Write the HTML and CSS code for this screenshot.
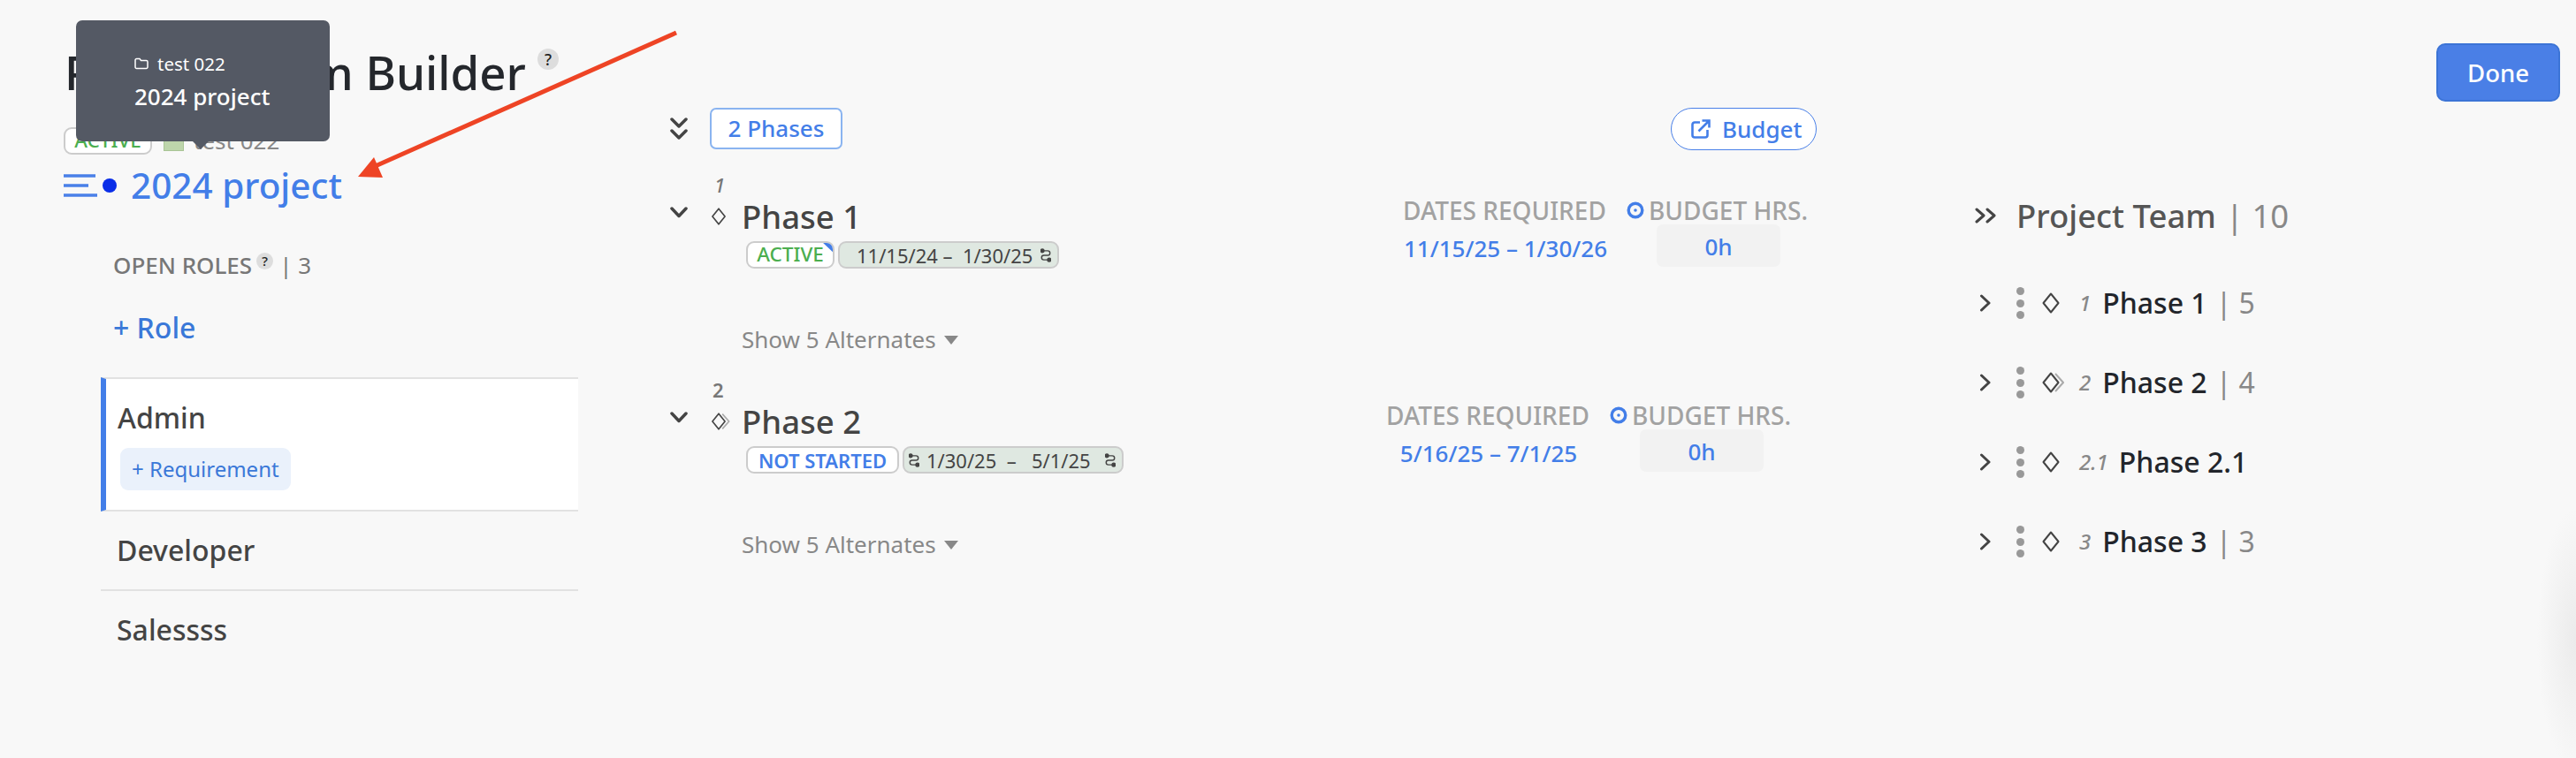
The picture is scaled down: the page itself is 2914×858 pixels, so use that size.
FILE: index.html
```html
<!DOCTYPE html>
<html lang="en">
<head>
<meta charset="utf-8">
<title>Project Team Builder</title>
<link rel="stylesheet" href="styles.css">
</head>
<body>
<svg class="defs" aria-hidden="true">
  <symbol id="diamond" viewBox="0 0 20 24"><path d="M10 1.5 18.5 12 10 22.5 1.5 12Z"/></symbol>
  <symbol id="diamond-next" viewBox="0 0 26 24"><path class="ghost" d="M15 2 24 12 15 22"/><path d="M10 1.5 18.5 12 10 22.5 1.5 12Z"/></symbol>
  <symbol id="swap" viewBox="0 0 14 18"><path d="M3 3H9.5A2.8 2.8 0 0 1 9.5 9H4.5A2.8 2.8 0 0 0 4.500 15H11"/><circle class="fill" cx="2.500" cy="3" r="2.100"/><circle class="fill" cx="11.500" cy="15" r="2.100"/></symbol>
</svg>

<div class="page">
  <section class="left">
    <h1 class="title">Project Team Builder<span class="help help-lg">?</span></h1>
    <div class="status-row">
      <span class="pill pill-green">ACTIVE</span>
      <span class="swatch"></span>
      <span class="client">test 022</span>
    </div>
    <div class="project-row">
      <svg class="burger" viewBox="0 0 38 26"><path d="M0 2H36M0 13H28M0 24H38"/></svg>
      <span class="dot"></span>
      <a class="project-name">2024 project</a>
    </div>
    <div class="roles-head">OPEN ROLES<span class="help help-sm">?</span><span class="roles-count">| 3</span></div>
    <div class="add-role">+ Role</div>
    <ul class="roles">
      <li class="role role-active">
        <div class="role-name">Admin</div>
        <span class="add-req">+ Requirement</span>
      </li>
      <li class="role role-line"><div class="role-name">Developer</div></li>
      <li class="role role-last"><div class="role-name">Salessss</div></li>
    </ul>
  </section>

  <section class="middle">
    <div class="mid-head">
      <div class="mid-head-left">
        <svg class="dbl-down" viewBox="0 0 20 26"><path d="M2 2 10 10 18 2M2 15 10 23 18 15"/></svg>
        <span class="phases-btn">2 Phases</span>
      </div>
      <span class="budget-btn">
        <svg class="ext" viewBox="0 0 22 22"><path d="M10 3.500H4A2.500 2.500 0 0 0 1.500 6V18A2.500 2.500 0 0 0 4 20.500H16A2.500 2.500 0 0 0 18.500 18V12M8.500 13.500 20 2M12.500 1.500H20.500V9.500"/></svg>
        Budget
      </span>
    </div>

    <article class="phase">
      <div class="phase-num">1</div>
      <svg class="chev-down" viewBox="0 0 20 13"><path d="M2 2 10 10.500 18 2"/></svg>
      <svg class="dia dia-mid"><use href="#diamond"/></svg>
      <div class="phase-name">Phase 1</div>
      <div class="pills">
        <span class="pill pill-green pill-flag">ACTIVE</span>
        <span class="pill pill-date pill-date-a">11/15/24 –  1/30/25<svg class="swap swap-end"><use href="#swap"/></svg></span>
      </div>
      <div class="alts">Show 5 Alternates<span class="caret"></span></div>
      <div class="meta">
        <div class="meta-label">DATES REQUIRED</div>
        <div class="meta-label meta-budget"><svg class="target" viewBox="0 0 20 20"><circle cx="10" cy="10" r="7.800"/><circle class="fill" cx="10" cy="10" r="1.800"/></svg>BUDGET HRS.</div>
        <div class="meta-date">11/15/25 – 1/30/26</div>
        <div class="meta-hours">0h</div>
      </div>
    </article>

    <article class="phase phase-second">
      <div class="phase-num phase-num-plain">2</div>
      <svg class="chev-down" viewBox="0 0 20 13"><path d="M2 2 10 10.500 18 2"/></svg>
      <svg class="dia dia-mid dia-next"><use href="#diamond-next"/></svg>
      <div class="phase-name">Phase 2</div>
      <div class="pills">
        <span class="pill pill-blue">NOT STARTED</span>
        <span class="pill pill-date pill-date-b"><svg class="swap"><use href="#swap"/></svg>1/30/25  –   5/1/25<svg class="swap swap-end"><use href="#swap"/></svg></span>
      </div>
      <div class="alts">Show 5 Alternates<span class="caret"></span></div>
      <div class="meta">
        <div class="meta-label">DATES REQUIRED</div>
        <div class="meta-label meta-budget"><svg class="target" viewBox="0 0 20 20"><circle cx="10" cy="10" r="7.800"/><circle class="fill" cx="10" cy="10" r="1.800"/></svg>BUDGET HRS.</div>
        <div class="meta-date">5/16/25 – 7/1/25</div>
        <div class="meta-hours">0h</div>
      </div>
    </article>
  </section>

  <section class="right">
    <div class="done-wrap"><button class="done">Done</button></div>
    <div class="team-head">
      <svg class="dbl-right" viewBox="0 0 24 18"><path d="M2 2 10 9 2 16M14 2 22 9 14 16"/></svg>
      <span class="team-title">Project Team</span>
      <span class="team-count">| 10</span>
    </div>
    <ul class="team">
      <li class="team-row">
        <svg class="chev-right" viewBox="0 0 14 20"><path d="M2.500 2 11 10 2.500 18"/></svg>
        <span class="kebab"><i></i><i></i><i></i></span>
        <svg class="dia dia-team"><use href="#diamond"/></svg>
        <span class="t-num">1</span><span class="t-name">Phase 1</span><span class="t-count">| 5</span>
      </li>
      <li class="team-row">
        <svg class="chev-right" viewBox="0 0 14 20"><path d="M2.500 2 11 10 2.500 18"/></svg>
        <span class="kebab"><i></i><i></i><i></i></span>
        <svg class="dia dia-team dia-next"><use href="#diamond-next"/></svg>
        <span class="t-num">2</span><span class="t-name">Phase 2</span><span class="t-count">| 4</span>
      </li>
      <li class="team-row">
        <svg class="chev-right" viewBox="0 0 14 20"><path d="M2.500 2 11 10 2.500 18"/></svg>
        <span class="kebab"><i></i><i></i><i></i></span>
        <svg class="dia dia-team"><use href="#diamond"/></svg>
        <span class="t-num t-num-wide">2.1</span><span class="t-name">Phase 2.1</span>
      </li>
      <li class="team-row">
        <svg class="chev-right" viewBox="0 0 14 20"><path d="M2.500 2 11 10 2.500 18"/></svg>
        <span class="kebab"><i></i><i></i><i></i></span>
        <svg class="dia dia-team"><use href="#diamond"/></svg>
        <span class="t-num">3</span><span class="t-name">Phase 3</span><span class="t-count">| 3</span>
      </li>
    </ul>
  </section>
</div>

<div class="edge-shade"></div>

<div class="tooltip">
  <div class="tip-client">
    <svg class="folder" viewBox="0 0 16 14"><path d="M1 3A1.500 1.500 0 0 1 2.500 1.500H6L7.500 3.500H13.500A1.500 1.500 0 0 1 15 5V11A1.500 1.500 0 0 1 13.500 12.500H2.500A1.500 1.500 0 0 1 1 11Z"/></svg>
    test 022
  </div>
  <div class="tip-project">2024 project</div>
</div>

<svg class="callout" viewBox="0 0 2914 858">
  <path class="callout-line" d="M765 37 420 190"/>
  <path class="callout-head" d="M405 200 423 178 433 201Z"/>
</svg>
</body>
</html>
```

FILE: styles.css
```css
* { box-sizing: border-box; }
html, body { margin: 0; padding: 0; }
body {
  width: 2914px;
  height: 858px;
  overflow: hidden;
  background: #f8f8f8;
  font-family: "Noto Sans", "Open Sans", sans-serif;
  color: #444;
  position: relative;
}
ul { list-style: none; margin: 0; padding: 0; }
.defs { display: none; }

.page {
  display: grid;
  grid-template-columns: 758px 1476px 680px;
  height: 858px;
}

/* ---- left column ---- */
.left { padding: 52px 0 0 72px; }
.title {
  display: flex;
  align-items: flex-start;
  margin: 0 0 0 1px;
  font-size: 52.800px;
  line-height: 60px;
  font-weight: 500;
  color: #24272c;
  white-space: nowrap;
}
.help {
  display: inline-flex;
  align-items: center;
  justify-content: center;
  border-radius: 50%;
  background: #ddd;
  color: #222;
  font-weight: 500;
}
.help-lg { width: 24px; height: 24px; font-size: 18px; line-height: 1; margin: 3px 0 0 13px; }
.help-sm { width: 19px; height: 19px; font-size: 15px; line-height: 1; margin: -10px 0 0 5px; }

.status-row { display: flex; align-items: center; margin-top: 32px; height: 31px; }
.pill {
  display: inline-flex;
  align-items: center;
  height: 31px;
  border: 2px solid #ccc;
  border-radius: 9px;
  background: #fff;
  font-size: 22px;
  line-height: 1;
  white-space: pre;
  position: relative;
}
.pill-green { color: #4bae4f; font-size: 22.500px; font-weight: 500; width: 100px; justify-content: center; }
.pill-blue { color: #437ee8; font-weight: 600; width: 173px; justify-content: center; }
.swatch {
  width: 23px;
  height: 23px;
  margin-left: 13px;
  background: #bdd5ab;
  border: 1px solid #a9c596;
}
.client { margin-left: 11px; font-size: 26px; line-height: 31px; color: #888; }

.project-row { display: flex; align-items: center; margin-top: 11px; height: 48px; }
.burger { width: 38px; height: 26px; fill: none; stroke: #4a80e8; stroke-width: 3.500; }
.dot { width: 16px; height: 16px; margin-left: 6px; border-radius: 50%; background: #0a2ee8; }
.project-name { margin-left: 16px; font-size: 40.500px; line-height: 48px; font-weight: 500; color: #437ee8; }

.roles-head {
  display: flex;
  align-items: center;
  margin: 50px 0 0 56px;
  font-size: 26px;
  line-height: 32px;
  font-weight: 500;
  color: #777;
}
.roles-count { margin-left: 7px; font-weight: 400; }
.add-role {
  margin: 35px 0 0 56px;
  font-size: 32px;
  line-height: 40px;
  font-weight: 500;
  color: #3a78d8;
}
.roles { margin: 36px 0 0 42px; width: 540px; }
.role { padding-left: 18px; }
.role-name { font-size: 32px; line-height: 40px; font-weight: 500; color: #444; }
.role-active {
  padding: 24px 0 22px 13px;
  background: #fff;
  border-top: 2px solid #e2e2e2;
  border-bottom: 2px solid #e2e2e2;
  border-left: 6px solid #437ee8;
}
.role-line { padding-top: 24px; padding-bottom: 24px; border-bottom: 2px solid #e2e2e2; }
.role-last { padding-top: 24px; }
.add-req {
  display: inline-block;
  margin: 14px 0 0 3px;
  padding: 0 13px 0 13px;
  height: 48px;
  border-radius: 9px;
  background: #eaf1fb;
  color: #3a78d8;
  font-size: 24px;
  line-height: 47px;
}

/* ---- middle column ---- */
.middle { padding-top: 122px; }
.mid-head { display: flex; justify-content: space-between; align-items: center; width: 1297px; height: 47px; }
.mid-head-left { display: flex; align-items: center; }
.dbl-down { width: 20px; height: 26px; fill: none; stroke: #444; stroke-width: 3.500; stroke-linecap: round; stroke-linejoin: round; }
.phases-btn {
  margin-left: 25px;
  width: 150px;
  height: 47px;
  border: 2px solid #8ab4f0;
  border-radius: 7px;
  background: #fff;
  color: #437ee8;
  font-size: 26px;
  line-height: 43px;
  font-weight: 500;
  text-align: center;
}
.budget-btn {
  display: flex;
  align-items: center;
  gap: 13px;
  width: 165px;
  height: 48px;
  padding-left: 22px;
  border: 1.500px solid #4a80e8;
  border-radius: 24px;
  background: #fff;
  color: #437ee8;
  font-size: 26px;
  line-height: 1;
  font-weight: 500;
}
.ext { width: 22px; height: 22px; fill: none; stroke: #437ee8; stroke-width: 2.600; }

.phase {
  display: grid;
  grid-template-columns: 46px 35px 748px auto;
  grid-template-rows: 28px 44px auto auto;
  margin-top: 26px;
  height: 205px;
  width: 1400px;
}
.phase-second { margin-top: 27px; grid-template-columns: 46px 35px 729px auto; }
.phase-num {
  grid-column: 2;
  grid-row: 1;
  font-size: 22px;
  line-height: 28px;
  font-style: italic;
  font-weight: 500;
  color: #777;
  padding-left: 4px;
}
.phase-num-plain { font-style: normal; font-weight: 600; padding-left: 2px; }
.chev-down {
  grid-column: 1;
  grid-row: 2;
  width: 20px;
  height: 13px;
  margin-top: 11px;
  fill: none;
  stroke: #444;
  stroke-width: 3.500;
  stroke-linecap: round;
  stroke-linejoin: round;
}
.dia { fill: none; stroke: #444; stroke-width: 2; stroke-linejoin: round; }
.dia .ghost, .ghost { stroke: #aaa; }
.dia-mid { grid-column: 2; grid-row: 2; width: 18px; height: 20px; margin-top: 12px; overflow: visible; }
.dia-mid.dia-next { width: 23px; }
.phase-name { grid-column: 3; grid-row: 2; font-size: 36.500px; line-height: 44px; font-weight: 500; color: #444; }
.pills { grid-column: 3; grid-row: 3; display: flex; gap: 4px; margin: 6px 0 0 5px; }
.pill-flag { overflow: hidden; }
.pill-flag::after {
  content: "";
  position: absolute;
  top: -2px;
  right: -2px;
  width: 15px;
  height: 14px;
  background: #437ee8;
  clip-path: polygon(0 0, 100% 0, 100% 100%);
}
.pill-date {
  background: #dfe8e1;
  color: #444;
  font-weight: 400;
  width: 250px;
}
.pill-date-a { padding-left: 19px; }
.pill-date-b { padding-left: 5px; }
.swap { width: 12px; height: 16px; fill: none; stroke: #444; stroke-width: 1.700; }
.swap .fill, .fill { fill: #444; }
.pill-date-b .swap:first-child { margin-right: 8px; }
.swap-end { margin-left: 9px; }
.pill-date-b .swap-end { margin-left: 16px; }
.alts {
  grid-column: 3;
  grid-row: 4;
  display: flex;
  align-items: center;
  margin-top: 64px;
  font-size: 26px;
  line-height: 32px;
  color: #888;
}
.caret {
  width: 0;
  height: 0;
  margin: 2px 0 0 9px;
  border-left: 8px solid transparent;
  border-right: 8px solid transparent;
  border-top: 10px solid #888;
}
.meta {
  grid-column: 4;
  grid-row: 1 / span 4;
  display: grid;
  grid-template-columns: 232px 208px;
  grid-template-rows: 32px auto;
  column-gap: 21px;
  align-content: start;
  margin-top: 27px;
}
.meta-label { font-size: 28px; line-height: 32px; font-weight: 500; color: #a2a2a2; white-space: nowrap; }
.meta-budget { display: flex; align-items: center; gap: 5px; }
.target { width: 20px; height: 20px; flex: none; fill: none; stroke: #437ee8; stroke-width: 3.400; }
.target .fill { fill: #437ee8; stroke: none; }
.meta-date { text-align: center; font-size: 26px; line-height: 32px; font-weight: 500; color: #437ee8; padding-top: 11px; white-space: nowrap; }
.meta-hours {
  justify-self: center;
  width: 140px;
  height: 48px;
  border-radius: 7px;
  background: #f2f2f2;
  color: #437ee8;
  font-size: 26px;
  line-height: 50px;
  font-weight: 500;
  text-align: center;
}

/* ---- right column ---- */
.right { padding-top: 49px; }
.done-wrap { display: flex; justify-content: flex-end; padding-right: 18px; }
.done {
  width: 140px;
  height: 66px;
  border: 2px solid #3c74d6;
  border-radius: 10px;
  background: #4a7fe6;
  color: #fff;
  font-family: inherit;
  font-size: 27.500px;
  font-weight: 500;
}
.team-head { display: flex; align-items: center; margin-top: 107px; height: 44px; }
.dbl-right { width: 24px; height: 18px; fill: none; stroke: #444; stroke-width: 3; stroke-linecap: round; stroke-linejoin: round; }
.team-title { margin-left: 23px; font-size: 36.500px; line-height: 44px; font-weight: 500; color: #555; }
.team-count { margin-left: 11px; font-size: 36.500px; line-height: 44px; color: #888; }
.team { margin-top: 32px; }
.team-row { display: flex; align-items: center; height: 90px; }
.chev-right { width: 14px; height: 20px; margin: 0 28px 0 5px; fill: none; stroke: #444; stroke-width: 3; stroke-linecap: round; stroke-linejoin: round; }
.kebab { display: flex; flex-direction: column; gap: 4.500px; width: 9px; margin-right: 20px; }
.kebab i { display: block; width: 9px; height: 9px; border-radius: 50%; background: #999; }
.dia-team { width: 20px; height: 24px; margin-right: 22px; overflow: visible; }
.dia-team.dia-next { width: 26px; margin-right: 16px; }
.t-num { font-size: 24px; font-style: italic; font-weight: 500; color: #888; line-height: 40px; margin-right: 13px; }
.t-num-wide { margin-right: 12px; }
.t-name { font-size: 32px; line-height: 40px; font-weight: 500; color: #22252b; }
.t-count { margin-left: 10px; font-size: 32px; line-height: 40px; color: #888; }

/* ---- overlays ---- */
.edge-shade {
  position: absolute;
  right: 0;
  top: 560px;
  width: 44px;
  height: 298px;
  background: radial-gradient(ellipse 100% 50% at 100% 55%, #ebebeb, rgba(248, 248, 248, 0) 100%);
}
.tooltip {
  position: absolute;
  left: 86px;
  top: 23px;
  width: 287px;
  height: 137px;
  padding: 36px 0 0 66px;
  border-radius: 7px;
  background: #545964;
  color: #fff;
  font-weight: 500;
}
.tooltip::after {
  content: "";
  position: absolute;
  left: 132px;
  top: 137px;
  width: 0;
  height: 0;
  border-left: 9px solid transparent;
  border-right: 9px solid transparent;
  border-top: 9px solid #545964;
}
.tip-client { display: flex; align-items: center; gap: 10px; font-size: 20.500px; line-height: 26px; font-weight: 400; }
.folder { width: 16px; height: 14px; fill: none; stroke: #fff; stroke-width: 1.500; }
.tip-project { margin-top: 7px; font-size: 26px; line-height: 34px; }
.callout { position: absolute; left: 0; top: 0; width: 2914px; height: 858px; pointer-events: none; }
.callout-line { fill: none; stroke: #ee4425; stroke-width: 5; }
.callout-head { fill: #ee4425; }
```
